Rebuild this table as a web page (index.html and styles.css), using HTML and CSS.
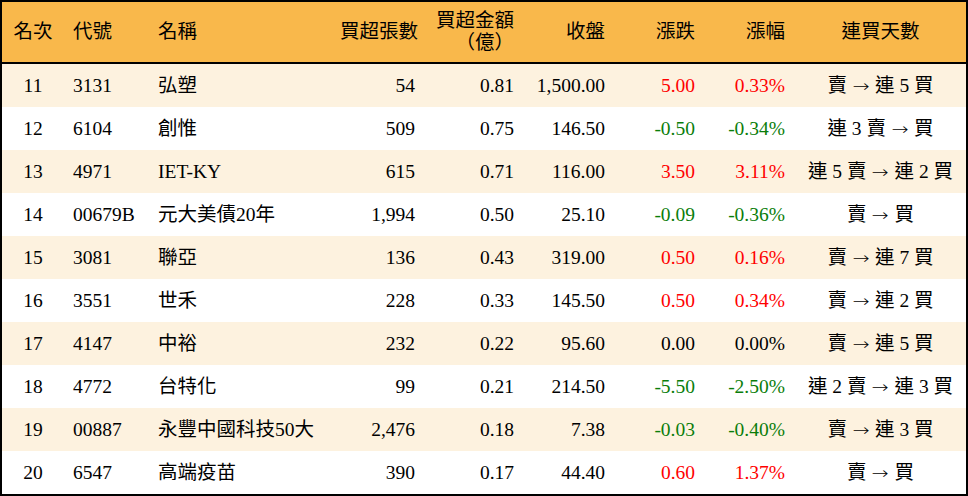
FILE: index.html
```html
<!DOCTYPE html>
<html lang="zh-Hant">
<head>
<meta charset="utf-8">
<title>買超排行</title>
<link rel="stylesheet" href="styles.css">
</head>
<body>
<table class="rank">
  <colgroup>
    <col class="c-rank"><col class="c-code"><col class="c-name"><col class="c-vol"><col class="c-amt"><col class="c-close"><col class="c-chg"><col class="c-pct"><col class="c-days">
  </colgroup>
  <thead>
    <tr>
      <th class="ctr">名次</th>
      <th class="lft">代號</th>
      <th class="lft name">名稱</th>
      <th class="rgt">買超張數</th>
      <th class="rgt">買超金額<br>（億）</th>
      <th class="rgt">收盤</th>
      <th class="rgt">漲跌</th>
      <th class="rgt">漲幅</th>
      <th class="ctr">連買天數</th>
    </tr>
  </thead>
  <tbody>
    <tr class="alt"><td class="ctr">11</td><td class="lft">3131</td><td class="lft name">弘塑</td><td class="rgt">54</td><td class="rgt">0.81</td><td class="rgt">1,500.00</td><td class="rgt up">5.00</td><td class="rgt up">0.33%</td><td class="ctr">賣 <span class="arrow">→</span> 連 5 買</td></tr>
    <tr><td class="ctr">12</td><td class="lft">6104</td><td class="lft name">創惟</td><td class="rgt">509</td><td class="rgt">0.75</td><td class="rgt">146.50</td><td class="rgt down">-0.50</td><td class="rgt down">-0.34%</td><td class="ctr">連 3 賣 <span class="arrow">→</span> 買</td></tr>
    <tr class="alt"><td class="ctr">13</td><td class="lft">4971</td><td class="lft name">IET-KY</td><td class="rgt">615</td><td class="rgt">0.71</td><td class="rgt">116.00</td><td class="rgt up">3.50</td><td class="rgt up">3.11%</td><td class="ctr">連 5 賣 <span class="arrow">→</span> 連 2 買</td></tr>
    <tr><td class="ctr">14</td><td class="lft">00679B</td><td class="lft name">元大美債20年</td><td class="rgt">1,994</td><td class="rgt">0.50</td><td class="rgt">25.10</td><td class="rgt down">-0.09</td><td class="rgt down">-0.36%</td><td class="ctr">賣 <span class="arrow">→</span> 買</td></tr>
    <tr class="alt"><td class="ctr">15</td><td class="lft">3081</td><td class="lft name">聯亞</td><td class="rgt">136</td><td class="rgt">0.43</td><td class="rgt">319.00</td><td class="rgt up">0.50</td><td class="rgt up">0.16%</td><td class="ctr">賣 <span class="arrow">→</span> 連 7 買</td></tr>
    <tr><td class="ctr">16</td><td class="lft">3551</td><td class="lft name">世禾</td><td class="rgt">228</td><td class="rgt">0.33</td><td class="rgt">145.50</td><td class="rgt up">0.50</td><td class="rgt up">0.34%</td><td class="ctr">賣 <span class="arrow">→</span> 連 2 買</td></tr>
    <tr class="alt"><td class="ctr">17</td><td class="lft">4147</td><td class="lft name">中裕</td><td class="rgt">232</td><td class="rgt">0.22</td><td class="rgt">95.60</td><td class="rgt">0.00</td><td class="rgt">0.00%</td><td class="ctr">賣 <span class="arrow">→</span> 連 5 買</td></tr>
    <tr><td class="ctr">18</td><td class="lft">4772</td><td class="lft name">台特化</td><td class="rgt">99</td><td class="rgt">0.21</td><td class="rgt">214.50</td><td class="rgt down">-5.50</td><td class="rgt down">-2.50%</td><td class="ctr">連 2 賣 <span class="arrow">→</span> 連 3 買</td></tr>
    <tr class="alt"><td class="ctr">19</td><td class="lft">00887</td><td class="lft name">永豐中國科技50大</td><td class="rgt">2,476</td><td class="rgt">0.18</td><td class="rgt">7.38</td><td class="rgt down">-0.03</td><td class="rgt down">-0.40%</td><td class="ctr">賣 <span class="arrow">→</span> 連 3 買</td></tr>
    <tr><td class="ctr">20</td><td class="lft">6547</td><td class="lft name">高端疫苗</td><td class="rgt">390</td><td class="rgt">0.17</td><td class="rgt">44.40</td><td class="rgt up">0.60</td><td class="rgt up">1.37%</td><td class="ctr">賣 <span class="arrow">→</span> 買</td></tr>
  </tbody>
</table>
</body>
</html>
```
FILE: styles.css
```css
html, body {
  margin: 0;
  padding: 0;
  background: #ffffff;
}

body {
  width: 968px;
  height: 496px;
  overflow: hidden;
  font-family: "Liberation Serif", "Noto Sans CJK TC", serif;
  font-size: 19.5px;
  color: #000000;
}

.rank {
  width: 968px;
  border-collapse: separate;
  border-spacing: 0;
  table-layout: fixed;
  border-style: solid;
  border-color: #000000;
  border-width: 2px 2px 3px 2px;
}

.c-rank { width: 62px; }
.c-code { width: 82px; }
.c-name { width: 194px; }
.c-vol { width: 85px; }
.c-amt { width: 99px; }
.c-close { width: 91px; }
.c-chg { width: 90px; }
.c-pct { width: 90px; }
.c-days { width: 171px; }

.rank th {
  background: #f9b84b;
  font-weight: normal;
  height: 60px;
  line-height: 22px;
  padding: 0;
  border-bottom: 2px solid #000000;
  vertical-align: middle;
  white-space: nowrap;
}

.rank td {
  height: 43px;
  padding: 0;
  line-height: 22px;
  vertical-align: middle;
  white-space: nowrap;
}

.rank tr.alt td {
  background: #fdf2df;
}

.ctr { text-align: center; }
.lft { text-align: left; padding-left: 9px !important; }
.lft.name { padding-left: 12px !important; }
.rgt { text-align: right; padding-right: 10px !important; }

.up { color: #ff0000; }
.down { color: #0a7d0a; }

.arrow {
  font-family: "DejaVu Sans", sans-serif;
  font-weight: 200;
  font-size: 17px;
  display: inline-block;
  margin: 0 2px;
  transform: scaleX(1.2);
}
```
